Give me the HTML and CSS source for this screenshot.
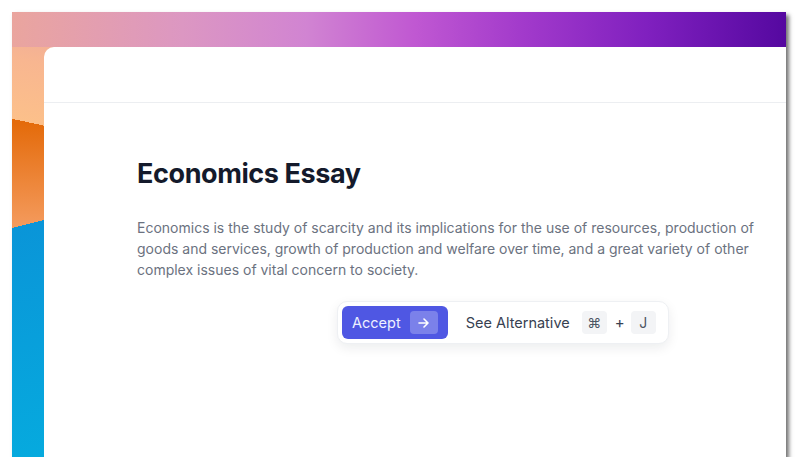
FILE: index.html
```html
<!DOCTYPE html>
<html lang="en">
<head>
    <meta charset="UTF-8">
    <meta name="viewport" content="width=device-width, initial-scale=1.0">
    <title>Economics Essay</title>
    <link rel="stylesheet" href="styles.css">
</head>
<body>
    <div class="frame">
        <div class="card">
            <div class="card-header"></div>
            <div class="card-body">
                <h1 class="title">Economics Essay</h1>
                <p class="essay">Economics is the study of scarcity and its implications for the use of resources, production of goods and services, growth of production and welfare over time, and a great variety of other complex issues of vital concern to society.</p>

                <!-- suggestion toolbar -->
                <div class="suggest">
                    <button class="accept">
                        <span>Accept</span>
                        <span class="accept-key">
                            <svg width="11" height="10" viewBox="0 0 11 10" fill="none" stroke="#fff" stroke-width="1.6" stroke-linecap="round" stroke-linejoin="round"><path d="M1 5h9M6 1l4 4-4 4"/></svg>
                        </span>
                    </button>
                    <span class="alt-label">See Alternative</span>
                    <span class="kbd">⌘</span>
                    <span class="plus">+</span>
                    <span class="kbd">J</span>
                </div>
            </div>
        </div>
    </div>
</body>
</html>
```

FILE: styles.css
```css
body {
    margin: 0;
    background-color: #fff;
    font-family: Inter, "Noto Sans", sans-serif;
}
.frame {
    margin: 12px 0 0 12px;
    width: 774px;
    height: 445px;
    padding: 35px 0 0 32px;
    box-sizing: border-box;
    display: flex;
    box-shadow: 3px 3px 4px rgba(0, 0, 0, 0.55);
    background-color: #e56c0c;
    background-image:
        linear-gradient(90deg, #eaa59e 0%, #dc97c2 22%, #d184d2 38%, #c058d2 52%, #a23acb 66%, #8020bf 82%, #5508a0 100%),
        linear-gradient(192deg, #eba79e 0%, #f8b690 12%, #fcc08a 25.5%, transparent 25.5%),
        linear-gradient(166deg, transparent 47.7%, #0a95d8 47.7%, #06aade 100%),
        linear-gradient(180deg, #e46b0b 25%, #f49a5c 48%);
    background-size: 100% 35px, 42px 100%, 32px 100%, 32px 100%;
    background-repeat: no-repeat;
}
.card {
    flex: 1;
    background-color: #fff;
    border-top-left-radius: 10px;
    display: flex;
    flex-direction: column;
}
.card-header {
    height: 55px;
    border-bottom: 1px solid #eceef1;
}
.card-body {
    padding: 54px 0 0 93px;
}
.title {
    margin: 0;
    font-size: 27px;
    line-height: 34px;
    font-weight: 700;
    letter-spacing: -0.015em;
    color: #141a2b;
}
.essay {
    margin: 26px 0 0;
    width: 625px;
    font-size: 14px;
    line-height: 21px;
    color: #6b7280;
}
.suggest {
    margin: 21px 0 0 200px;
    display: inline-flex;
    align-items: center;
    padding: 4px 12px 4px 4px;
    background-color: #fff;
    border: 1px solid #eef0f3;
    border-radius: 10px;
    box-shadow: 0 4px 12px rgba(17, 24, 39, 0.08);
}
.accept {
    display: flex;
    align-items: center;
    gap: 9px;
    height: 33px;
    padding: 0 10px;
    border: none;
    border-radius: 6px;
    background-color: #4f57e3;
    color: #eef0ff;
    font-family: inherit;
    font-size: 14.5px;
}
.accept-key {
    display: flex;
    align-items: center;
    justify-content: center;
    width: 28px;
    height: 23px;
    border-radius: 4px;
    background-color: rgba(255, 255, 255, 0.25);
}
.alt-label {
    margin-left: 18px;
    font-size: 14.5px;
    color: #374151;
}
.kbd {
    display: flex;
    align-items: center;
    justify-content: center;
    width: 25px;
    height: 23px;
    margin-left: 12px;
    border-radius: 4px;
    background-color: #f3f4f6;
    font-size: 14px;
    color: #4b5563;
}
.plus {
    margin-left: 8px;
    font-size: 15px;
    color: #374151;
}
.plus + .kbd {
    margin-left: 6px;
}
```
